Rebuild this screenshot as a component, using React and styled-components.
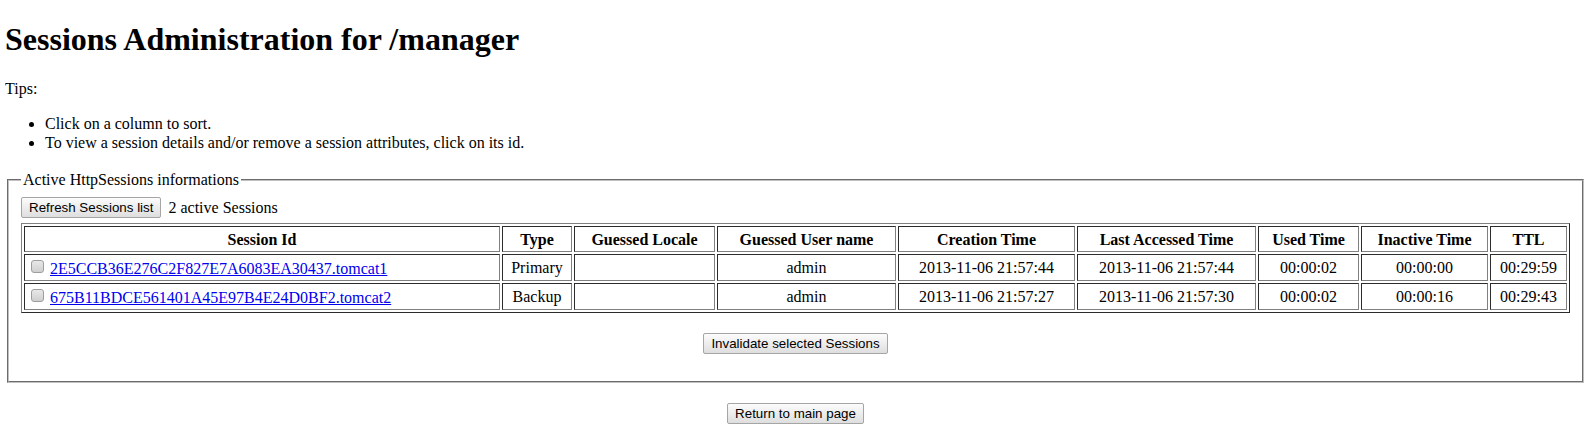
import React from 'react';
import styled, { createGlobalStyle } from 'styled-components';

const GlobalStyle = createGlobalStyle`
  body {
    margin: 0 9px 8px 5px;
    font-family: "Liberation Serif", "Times New Roman", serif;
    font-size: 16px;
    line-height: 19px;
    color: #000;
    background: #fff;
  }
`;

const sessions = [
  {
    id: '2E5CCB36E276C2F827E7A6083EA30437.tomcat1',
    type: 'Primary',
    locale: '',
    user: 'admin',
    created: '2013-11-06 21:57:44',
    accessed: '2013-11-06 21:57:44',
    used: '00:00:02',
    inactive: '00:00:00',
    ttl: '00:29:59',
  },
  {
    id: '675B11BDCE561401A45E97B4E24D0BF2.tomcat2',
    type: 'Backup',
    locale: '',
    user: 'admin',
    created: '2013-11-06 21:57:27',
    accessed: '2013-11-06 21:57:30',
    used: '00:00:02',
    inactive: '00:00:16',
    ttl: '00:29:43',
  },
];

// TTL has no width: it takes whatever the table has left
const columns = [
  { label: 'Session Id', width: 476 },
  { label: 'Type', width: 70 },
  { label: 'Guessed Locale', width: 141 },
  { label: 'Guessed User name', width: 179 },
  { label: 'Creation Time', width: 177 },
  { label: 'Last Accessed Time', width: 179 },
  { label: 'Used Time', width: 101 },
  { label: 'Inactive Time', width: 127 },
  { label: 'TTL' },
];

export default function App() {
  return (
    <>
      <GlobalStyle />
      <S.Title>Sessions Administration for /manager</S.Title>
      <S.Tips>Tips:</S.Tips>
      <S.TipList>
        <li>Click on a column to sort.</li>
        <li>To view a session details and/or remove a session attributes, click on its id.</li>
      </S.TipList>

      <form onSubmit={(e) => e.preventDefault()}>
        <S.Panel>
          <S.Legend>Active HttpSessions informations</S.Legend>
          <S.Toolbar>
            <S.Button type="button">Refresh Sessions list</S.Button>
            <span>{sessions.length} active Sessions</span>
          </S.Toolbar>
          <S.Table>
            <thead>
              <tr>
                {columns.map((col) => (
                  <S.HeadCell key={col.label} $w={col.width}>{col.label}</S.HeadCell>
                ))}
              </tr>
            </thead>
            <tbody>
              {sessions.map((s) => (
                <tr key={s.id}>
                  <S.Cell $left>
                    <S.Check type="checkbox" />
                    <S.SessionLink href="#">{s.id}</S.SessionLink>
                  </S.Cell>
                  <S.Cell>{s.type}</S.Cell>
                  <S.Cell>{s.locale}</S.Cell>
                  <S.Cell>{s.user}</S.Cell>
                  <S.Cell>{s.created}</S.Cell>
                  <S.Cell>{s.accessed}</S.Cell>
                  <S.Cell>{s.used}</S.Cell>
                  <S.Cell>{s.inactive}</S.Cell>
                  <S.Cell>{s.ttl}</S.Cell>
                </tr>
              ))}
            </tbody>
          </S.Table>
          <S.Actions>
            <S.Button type="button">Invalidate selected Sessions</S.Button>
          </S.Actions>
        </S.Panel>
      </form>

      <form onSubmit={(e) => e.preventDefault()}>
        <S.Actions>
          <S.Button type="button">Return to main page</S.Button>
        </S.Actions>
      </form>
    </>
  );
}

const S = {
  Title: styled.h1`
    font-size: 32px;
    line-height: normal;
    font-weight: bold;
    margin: 21px 0;
  `,
  Tips: styled.p`
    margin: 16px 0;
  `,
  TipList: styled.ul`
    margin: 16px 0 18px;
    padding-left: 40px;
  `,
  Panel: styled.fieldset`
    margin: 0 2px;
    padding: 8px 12px 11px;
    border: 2px groove #c0c0c0;
    min-width: 0;
  `,
  Legend: styled.legend`
    padding: 0 2px;
  `,
  Toolbar: styled.div`
    display: flex;
    align-items: center;
    gap: 7px;
    margin-bottom: 5px;
  `,
  Button: styled.button`
    box-sizing: border-box;
    height: 21px;
    font-family: "Liberation Sans", Arial, sans-serif;
    font-size: 13.33px;
    line-height: 15px;
    color: #000;
    padding: 0 7px;
    border: 1px solid #a5a5a5;
    border-radius: 2px;
    background: linear-gradient(#fcfcfc, #dedede);
    cursor: pointer;
  `,
  Table: styled.table`
    width: 100%;
    border: 1px outset #808080;
    border-spacing: 2px;
    border-collapse: separate;
  `,
  HeadCell: styled.th`
    box-sizing: border-box;
    width: ${(p) => (p.$w ? `${p.$w}px` : 'auto')};
    height: 26px;
    padding: 2px;
    border: 1px inset #808080;
    font-weight: bold;
    text-align: center;
  `,
  Cell: styled.td`
    box-sizing: border-box;
    height: 27px;
    padding: 2px;
    border: 1px inset #808080;
    text-align: ${(p) => (p.$left ? 'left' : 'center')};
  `,
  Check: styled.input`
    appearance: none;
    width: 13px;
    height: 13px;
    margin: 3px 6px 3px 4px;
    vertical-align: -2px;
    border: 1px solid #9d9d9d;
    border-radius: 3px;
    background: linear-gradient(#e8e8e8, #cfcfcf);
  `,
  SessionLink: styled.a`
    color: #0000ee;
    text-decoration: underline;
  `,
  Actions: styled.div`
    display: flex;
    justify-content: center;
    margin: 20px 0 16px;
  `,
};
